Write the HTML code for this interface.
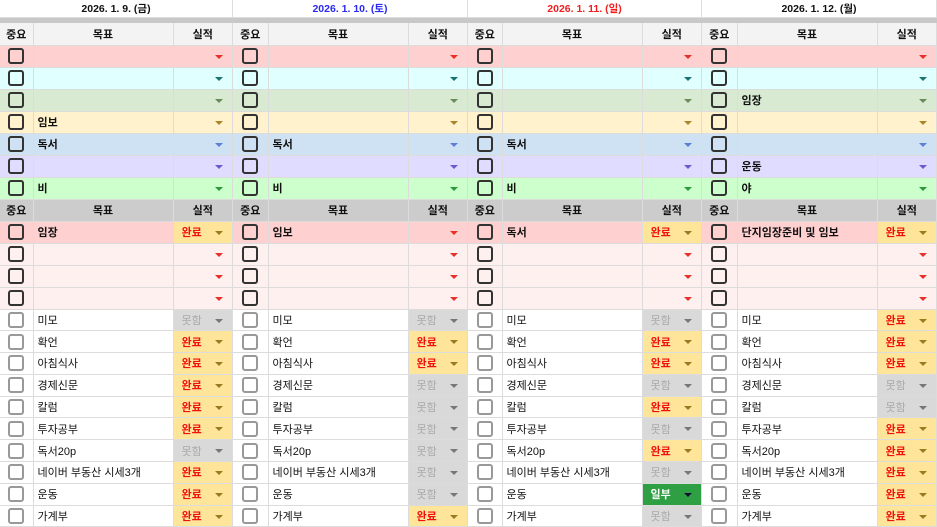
<!DOCTYPE html>
<html><head><meta charset="utf-8"><style>
*{margin:0;padding:0;box-sizing:border-box}
body{width:937px;height:525px;overflow:hidden;background:#fff;font-family:"Liberation Sans","Noto Sans CJK KR","NanumGothic",sans-serif;font-size:11px;color:#111;position:relative}
.b{position:absolute;top:0}
.dt{height:18px;line-height:18px;text-align:center;font-size:10.5px;font-weight:bold;border-right:1px solid #ddd;border-bottom:1px solid #ddd}
.gb{height:5px;background:#c8c8c8}
table{border-collapse:collapse;table-layout:fixed;width:100%}
td{height:22px;border-right:1px solid #dcdcdc;border-bottom:1px solid #dcdcdc;padding:0 4px;white-space:nowrap;overflow:hidden;position:relative;font-weight:bold;font-size:11px}
tr.w td{height:21.8px}
tr.h td{text-align:center;font-weight:bold;background:#f3f3f3;font-size:11px}
tr.h2 td{background:#cccccc}
td.c i{display:block;width:16px;height:16px;border:2px solid #333;border-radius:3px;margin:0 auto;background:transparent}
tr.w td.c i{border:2px solid #999;border-radius:3px}
tr.w td{font-weight:normal}
td.s{text-align:left;padding-left:8px}
td.s:after{content:"";position:absolute;right:9px;top:9px;border-left:4px solid transparent;border-right:4px solid transparent;border-top:4px solid var(--a)}
tr.r td{background:#ffd0d0;--a:#e8302a}
tr.cy td{background:#e0ffff;--a:#1a7373}
tr.g td{background:#d9ead3;--a:#6a8a5a}
tr.y td{background:#fff2cc;--a:#a8862a}
tr.bl td{background:#cfe2f3;--a:#5b7fd6}
tr.p td{background:#e0dcff;--a:#6a5acd}
tr.lg td{background:#ccffcc;--a:#2a9a3a}
tr.pr td{background:#fff0f0;--a:#e8302a}
tr.w td{background:#fff}
td.s.ok{background:#ffe599!important;color:#f01010;font-weight:bold;--a:#9a7a20}
td.s.no{background:#d9d9d9!important;color:#aaa;font-weight:normal;--a:#777}
td.s.pt{background:#2ea043!important;color:#fff;font-weight:bold;--a:#113}
</style></head><body>

<div class="b" style="left:0;width:233px">
<div class="dt" style="color:#111">2026. 1. 9. (금)</div><div class="gb"></div>
<table><colgroup><col style="width:33px"><col style="width:140px"><col></colgroup>
<tr class="h"><td>중요</td><td>목표</td><td>실적</td></tr>
<tr class="r"><td class="c"><i></i></td><td></td><td class="s"></td></tr>
<tr class="cy"><td class="c"><i></i></td><td></td><td class="s"></td></tr>
<tr class="g"><td class="c"><i></i></td><td></td><td class="s"></td></tr>
<tr class="y"><td class="c"><i></i></td><td>임보</td><td class="s"></td></tr>
<tr class="bl"><td class="c"><i></i></td><td>독서</td><td class="s"></td></tr>
<tr class="p"><td class="c"><i></i></td><td></td><td class="s"></td></tr>
<tr class="lg"><td class="c"><i></i></td><td>비</td><td class="s"></td></tr>
<tr class="h h2"><td>중요</td><td>목표</td><td>실적</td></tr>
<tr class="r"><td class="c"><i></i></td><td>임장</td><td class="s ok">완료</td></tr>
<tr class="pr"><td class="c"><i></i></td><td></td><td class="s"></td></tr>
<tr class="pr"><td class="c"><i></i></td><td></td><td class="s"></td></tr>
<tr class="pr"><td class="c"><i></i></td><td></td><td class="s"></td></tr>
<tr class="w"><td class="c"><i></i></td><td>미모</td><td class="s no">못함</td></tr>
<tr class="w"><td class="c"><i></i></td><td>확언</td><td class="s ok">완료</td></tr>
<tr class="w"><td class="c"><i></i></td><td>아침식사</td><td class="s ok">완료</td></tr>
<tr class="w"><td class="c"><i></i></td><td>경제신문</td><td class="s ok">완료</td></tr>
<tr class="w"><td class="c"><i></i></td><td>칼럼</td><td class="s ok">완료</td></tr>
<tr class="w"><td class="c"><i></i></td><td>투자공부</td><td class="s ok">완료</td></tr>
<tr class="w"><td class="c"><i></i></td><td>독서20p</td><td class="s no">못함</td></tr>
<tr class="w"><td class="c"><i></i></td><td>네이버 부동산 시세3개</td><td class="s ok">완료</td></tr>
<tr class="w"><td class="c"><i></i></td><td>운동</td><td class="s ok">완료</td></tr>
<tr class="w"><td class="c"><i></i></td><td>가계부</td><td class="s ok">완료</td></tr>
</table></div>

<div class="b" style="left:233px;width:235px">
<div class="dt" style="color:#2a2af0">2026. 1. 10. (토)</div><div class="gb"></div>
<table><colgroup><col style="width:35px"><col style="width:140px"><col></colgroup>
<tr class="h"><td>중요</td><td>목표</td><td>실적</td></tr>
<tr class="r"><td class="c"><i></i></td><td></td><td class="s"></td></tr>
<tr class="cy"><td class="c"><i></i></td><td></td><td class="s"></td></tr>
<tr class="g"><td class="c"><i></i></td><td></td><td class="s"></td></tr>
<tr class="y"><td class="c"><i></i></td><td></td><td class="s"></td></tr>
<tr class="bl"><td class="c"><i></i></td><td>독서</td><td class="s"></td></tr>
<tr class="p"><td class="c"><i></i></td><td></td><td class="s"></td></tr>
<tr class="lg"><td class="c"><i></i></td><td>비</td><td class="s"></td></tr>
<tr class="h h2"><td>중요</td><td>목표</td><td>실적</td></tr>
<tr class="r"><td class="c"><i></i></td><td>임보</td><td class="s"></td></tr>
<tr class="pr"><td class="c"><i></i></td><td></td><td class="s"></td></tr>
<tr class="pr"><td class="c"><i></i></td><td></td><td class="s"></td></tr>
<tr class="pr"><td class="c"><i></i></td><td></td><td class="s"></td></tr>
<tr class="w"><td class="c"><i></i></td><td>미모</td><td class="s no">못함</td></tr>
<tr class="w"><td class="c"><i></i></td><td>확언</td><td class="s ok">완료</td></tr>
<tr class="w"><td class="c"><i></i></td><td>아침식사</td><td class="s ok">완료</td></tr>
<tr class="w"><td class="c"><i></i></td><td>경제신문</td><td class="s no">못함</td></tr>
<tr class="w"><td class="c"><i></i></td><td>칼럼</td><td class="s no">못함</td></tr>
<tr class="w"><td class="c"><i></i></td><td>투자공부</td><td class="s no">못함</td></tr>
<tr class="w"><td class="c"><i></i></td><td>독서20p</td><td class="s no">못함</td></tr>
<tr class="w"><td class="c"><i></i></td><td>네이버 부동산 시세3개</td><td class="s no">못함</td></tr>
<tr class="w"><td class="c"><i></i></td><td>운동</td><td class="s no">못함</td></tr>
<tr class="w"><td class="c"><i></i></td><td>가계부</td><td class="s ok">완료</td></tr>
</table></div>

<div class="b" style="left:468px;width:234px">
<div class="dt" style="color:#f02020">2026. 1. 11. (일)</div><div class="gb"></div>
<table><colgroup><col style="width:34px"><col style="width:140px"><col></colgroup>
<tr class="h"><td>중요</td><td>목표</td><td>실적</td></tr>
<tr class="r"><td class="c"><i></i></td><td></td><td class="s"></td></tr>
<tr class="cy"><td class="c"><i></i></td><td></td><td class="s"></td></tr>
<tr class="g"><td class="c"><i></i></td><td></td><td class="s"></td></tr>
<tr class="y"><td class="c"><i></i></td><td></td><td class="s"></td></tr>
<tr class="bl"><td class="c"><i></i></td><td>독서</td><td class="s"></td></tr>
<tr class="p"><td class="c"><i></i></td><td></td><td class="s"></td></tr>
<tr class="lg"><td class="c"><i></i></td><td>비</td><td class="s"></td></tr>
<tr class="h h2"><td>중요</td><td>목표</td><td>실적</td></tr>
<tr class="r"><td class="c"><i></i></td><td>독서</td><td class="s ok">완료</td></tr>
<tr class="pr"><td class="c"><i></i></td><td></td><td class="s"></td></tr>
<tr class="pr"><td class="c"><i></i></td><td></td><td class="s"></td></tr>
<tr class="pr"><td class="c"><i></i></td><td></td><td class="s"></td></tr>
<tr class="w"><td class="c"><i></i></td><td>미모</td><td class="s no">못함</td></tr>
<tr class="w"><td class="c"><i></i></td><td>확언</td><td class="s ok">완료</td></tr>
<tr class="w"><td class="c"><i></i></td><td>아침식사</td><td class="s ok">완료</td></tr>
<tr class="w"><td class="c"><i></i></td><td>경제신문</td><td class="s no">못함</td></tr>
<tr class="w"><td class="c"><i></i></td><td>칼럼</td><td class="s ok">완료</td></tr>
<tr class="w"><td class="c"><i></i></td><td>투자공부</td><td class="s no">못함</td></tr>
<tr class="w"><td class="c"><i></i></td><td>독서20p</td><td class="s ok">완료</td></tr>
<tr class="w"><td class="c"><i></i></td><td>네이버 부동산 시세3개</td><td class="s no">못함</td></tr>
<tr class="w"><td class="c"><i></i></td><td>운동</td><td class="s pt">일부</td></tr>
<tr class="w"><td class="c"><i></i></td><td>가계부</td><td class="s no">못함</td></tr>
</table></div>

<div class="b" style="left:702px;width:235px">
<div class="dt" style="color:#111">2026. 1. 12. (월)</div><div class="gb"></div>
<table><colgroup><col style="width:35px"><col style="width:140px"><col></colgroup>
<tr class="h"><td>중요</td><td>목표</td><td>실적</td></tr>
<tr class="r"><td class="c"><i></i></td><td></td><td class="s"></td></tr>
<tr class="cy"><td class="c"><i></i></td><td></td><td class="s"></td></tr>
<tr class="g"><td class="c"><i></i></td><td>임장</td><td class="s"></td></tr>
<tr class="y"><td class="c"><i></i></td><td></td><td class="s"></td></tr>
<tr class="bl"><td class="c"><i></i></td><td></td><td class="s"></td></tr>
<tr class="p"><td class="c"><i></i></td><td>운동</td><td class="s"></td></tr>
<tr class="lg"><td class="c"><i></i></td><td>야</td><td class="s"></td></tr>
<tr class="h h2"><td>중요</td><td>목표</td><td>실적</td></tr>
<tr class="r"><td class="c"><i></i></td><td>단지임장준비 및 임보</td><td class="s ok">완료</td></tr>
<tr class="pr"><td class="c"><i></i></td><td></td><td class="s"></td></tr>
<tr class="pr"><td class="c"><i></i></td><td></td><td class="s"></td></tr>
<tr class="pr"><td class="c"><i></i></td><td></td><td class="s"></td></tr>
<tr class="w"><td class="c"><i></i></td><td>미모</td><td class="s ok">완료</td></tr>
<tr class="w"><td class="c"><i></i></td><td>확언</td><td class="s ok">완료</td></tr>
<tr class="w"><td class="c"><i></i></td><td>아침식사</td><td class="s ok">완료</td></tr>
<tr class="w"><td class="c"><i></i></td><td>경제신문</td><td class="s no">못함</td></tr>
<tr class="w"><td class="c"><i></i></td><td>칼럼</td><td class="s no">못함</td></tr>
<tr class="w"><td class="c"><i></i></td><td>투자공부</td><td class="s ok">완료</td></tr>
<tr class="w"><td class="c"><i></i></td><td>독서20p</td><td class="s ok">완료</td></tr>
<tr class="w"><td class="c"><i></i></td><td>네이버 부동산 시세3개</td><td class="s ok">완료</td></tr>
<tr class="w"><td class="c"><i></i></td><td>운동</td><td class="s ok">완료</td></tr>
<tr class="w"><td class="c"><i></i></td><td>가계부</td><td class="s ok">완료</td></tr>
</table></div>
</body></html>
